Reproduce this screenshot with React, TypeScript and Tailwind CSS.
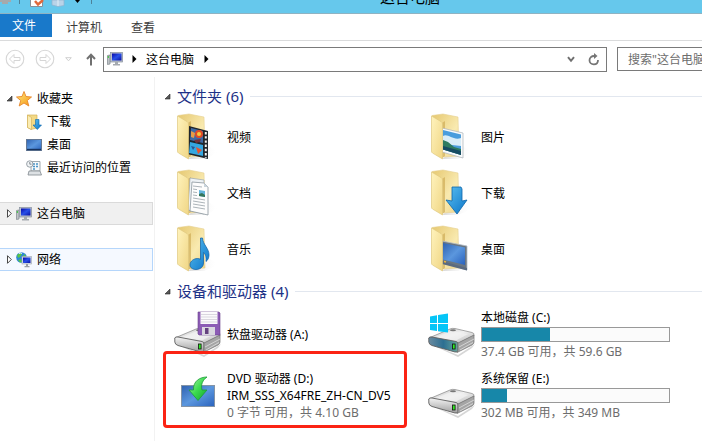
import React from "react";

type Kids = { children?: React.ReactNode };

function Defs() {
  return (
    <svg width="0" height="0" className="absolute" aria-hidden="true">
      <defs>
        <linearGradient id="flap" x1="0" y1="0" x2="1" y2="1">
          <stop offset="0" stopColor="#fff3bd" />
          <stop offset="1" stopColor="#f0d685" />
        </linearGradient>
        <linearGradient id="back" x1="0" y1="0" x2="1" y2="1">
          <stop offset="0" stopColor="#e6c870" />
          <stop offset="0.6" stopColor="#f9eab0" />
          <stop offset="1" stopColor="#efd58a" />
        </linearGradient>
        <linearGradient id="arrow" x1="0" y1="0" x2="1" y2="1">
          <stop offset="0" stopColor="#5cc0f0" />
          <stop offset="1" stopColor="#0a74c8" />
        </linearGradient>
        <linearGradient id="screen" x1="0" y1="0" x2="1" y2="1">
          <stop offset="0" stopColor="#2f62b0" />
          <stop offset="0.5" stopColor="#5b97de" />
          <stop offset="1" stopColor="#2a62bd" />
        </linearGradient>
        <linearGradient id="monitor" x1="0" y1="0" x2="1" y2="1">
          <stop offset="0" stopColor="#0808a8" />
          <stop offset="0.5" stopColor="#2850e8" />
          <stop offset="1" stopColor="#0a10a0" />
        </linearGradient>
        <linearGradient id="top" x1="0" y1="0" x2="1" y2="1">
          <stop offset="0" stopColor="#c2c2c2" />
          <stop offset="0.5" stopColor="#f0f0f0" />
          <stop offset="1" stopColor="#b5b5b5" />
        </linearGradient>
        <linearGradient id="front" x1="0" y1="0" x2="0" y2="1">
          <stop offset="0" stopColor="#f4f4f4" />
          <stop offset="1" stopColor="#a0a0a0" />
        </linearGradient>
        <linearGradient id="frontBlue" x1="0" y1="0" x2="1" y2="0">
          <stop offset="0" stopColor="#6a8ba0" />
          <stop offset="0.5" stopColor="#2d6f92" />
          <stop offset="1" stopColor="#68a69a" />
        </linearGradient>
        <linearGradient id="green" x1="0" y1="0" x2="1" y2="1">
          <stop offset="0" stopColor="#b6f5b0" />
          <stop offset="0.5" stopColor="#3ddc50" />
          <stop offset="1" stopColor="#12a52c" />
        </linearGradient>
        <linearGradient id="star" x1="0" y1="0" x2="1" y2="1">
          <stop offset="0" stopColor="#ffec80" />
          <stop offset="1" stopColor="#f49412" />
        </linearGradient>
        <linearGradient id="shade" x1="0" y1="0" x2="1" y2="0">
          <stop offset="0" stopColor="#bbbbbb" />
          <stop offset="1" stopColor="#ffffff" stopOpacity="0" />
        </linearGradient>
      </defs>
    </svg>
  );
}

function Folder({ children }: Kids) {
  return (
    <svg width="48" height="48" viewBox="0 0 48 48" className="shrink-0" aria-hidden="true">
      <path d="M14 46 L30 46 L44 40 L34 32Z" fill="url(#shade)" opacity="0.6" />
      <path d="M4 2.5 L15 1 L30 4 L31 43 L14 44Z" fill="url(#back)" stroke="#e6d090" strokeWidth="0.6" />
      <path d="M14 10 L17 8 L17 43 L14 45Z" fill="#c9a54c" opacity="0.6" />
      {children}
      <path d="M3.5 3 L13 8.5 Q14.5 9.5 14.5 11 V46 L4.5 40 Q3.5 39.5 3.5 38Z" fill="url(#flap)" stroke="#e0c87f" strokeWidth="0.7" />
    </svg>
  );
}

function VideoArt() {
  return (
    <g>
      <path d="M15 13 L34 18 V46 L13 41Z" fill="#20262c" />
      <path d="M17 15 L29 18 V30 L16 27Z" fill="#3e6aa6" />
      <path d="M16 29 L29 32 V43 L15 40Z" fill="#35a7e0" />
      <circle cx="25" cy="21" r="4" fill="#e04a28" />
      <circle cx="25" cy="21" r="2" fill="#f6c93a" />
      <path d="M17 18 L21 20 L20 25 L17 24Z" fill="#e89c48" />
      <path d="M20 27 L27 26 L26 29 L22 30Z" fill="#74313a" />
      <path d="M22 34 L28 37 L24 41Z" fill="#e8532e" />
      <path d="M17 33 L21 34 L19 37Z" fill="#2c5390" />
      <path d="M31.8 19 V45" stroke="#f4f4f4" strokeWidth="2" strokeDasharray="2.4 1.8" />
    </g>
  );
}

function DocumentArt() {
  return (
    <g>
      <path d="M16 9 L30 11 V45 L14 41Z" fill="#eef2f5" stroke="#9ba6ad" strokeWidth="0.7" />
      <path d="M18 13 L30 14 L34 18 V46 L16 42Z" fill="#fdfdfd" stroke="#8a959d" strokeWidth="0.8" />
      <path d="M30 14 V18 H34Z" fill="#c9d4dc" />
      <path d="M19 17 L28 18 M19 20 L23 20.6 M19 23 L23 23.6 M19 26 L23 26.6 M19 29 L31 31 M19 32 L31 34 M19 35 L31 37 M19 38 L31 40" stroke="#a3abb1" strokeWidth="0.9" />
      <path d="M25 21 L31 22 V28 L25 27Z" fill="#63b4dc" />
      <path d="M25 25 L28 24 L31 26 V28 L25 27Z" fill="#36775b" />
    </g>
  );
}

function MusicArt() {
  return (
    <g fill="url(#arrow)" stroke="#0b5ca4" strokeWidth="0.7">
      <path d="M26.5 13 H28.5 C29 20 35 23 35 30 C35 33 33.5 35.5 32 36.5 C32.5 31.5 31 28.5 29.5 27.5 V38 C29.5 42 26 44.5 22 44.5 C18.5 44.5 16 42.5 16 40 C16 36 20 33.5 23.5 33.5 C24.8 33.5 26 34 26.5 34.3Z" />
    </g>
  );
}

function PictureArt() {
  return (
    <g>
      <path d="M14 15 L35 20 V45 L14 39Z" fill="#f9fafb" stroke="#aab2b8" strokeWidth="0.7" />
      <path d="M15 17 L33 21.5 V42 L15 36.5Z" fill="#4a9ddd" />
      <path d="M15 23 C20 20 25 28 33 25 V33 L15 31Z" fill="#d9edf8" />
      <path d="M15 27 L20 29 L26 34 L33 36 V42 L15 36.5Z" fill="#2e7b60" />
      <path d="M15 33 L33 38 V42 L15 36.5Z" fill="#174b63" />
    </g>
  );
}

function DownloadArt() {
  return <path d="M24 18 L33 18 L34 20 V32 L39 31 L29 45 L18 31 L24 32Z" fill="url(#arrow)" stroke="#0c66ab" strokeWidth="0.8" />;
}

function DesktopArt() {
  return (
    <g>
      <path d="M14 16 L39 21 V45 L14 38Z" fill="#6a7682" stroke="#b5bec7" strokeWidth="0.8" />
      <path d="M15 18 L37 22.5 V40 L15 34.5Z" fill="url(#screen)" />
      <path d="M14 36 L39 43 V45.5 L14 39Z" fill="#5a6a80" />
      <path d="M16 36.5 L18 37" stroke="#f3b637" strokeWidth="1.5" />
    </g>
  );
}

function Drive({ blue = false, children }: Kids & { blue?: boolean }) {
  return (
    <svg width="48" height="48" viewBox="0 0 48 48" className="shrink-0" aria-hidden="true">
      <path d="M2 33 L30 44 L47 33 L44 37 L30 46Z" fill="#999" opacity="0.4" />
      <path d="M0.8 27 L22 18 Q24 17 27 17.5 L44 21.5 Q46.5 22 46 24.5 L31 32Z" fill="url(#top)" stroke="#858585" strokeWidth="0.7" />
      <path d="M7 26.5 L23 20 L40 23 L28 29.5Z" fill="#f1f1f1" opacity="0.75" />
      <path d="M0.8 27 Q1.5 25.5 4 26 L28 30.5 Q30 31 30 33 V39.5 Q30 41.5 27 41 L4 34.5 Q1 33.5 0.8 31Z" fill={blue ? "url(#frontBlue)" : "url(#front)"} stroke="#5e5e5e" strokeWidth="0.9" />
      <path d="M30 32 L46 24 V31 Q46 33 44 34 L29 41.5 Q30 40 30 39Z" fill="#a5a5a5" stroke="#707070" strokeWidth="0.7" />
      <path d="M31 36 L46 28 M32 39 L45 31.5" stroke="#dedede" strokeWidth="0.8" />
      <rect x="24.5" y="33" width="2.6" height="5" fill="#2fea20" stroke="#111" strokeWidth="0.8" />
      <ellipse cx="25" cy="19.2" rx="3" ry="1" fill="#777" />
      {children}
    </svg>
  );
}

function FloppyArt() {
  return (
    <g>
      <path d="M24 1 H45 L46 2 V24 H25 L24 23Z" fill="#8c5cb5" stroke="#68408c" strokeWidth="0.6" />
      <rect x="26.5" y="1" width="17" height="12" fill="#fbfafc" />
      <path d="M27 3.5 H43 M27 6 H43 M27 8.5 H43 M27 11 H43" stroke="#ccc7d3" strokeWidth="0.7" />
      <rect x="28" y="16" width="13" height="8" fill="#d9d7df" />
      <rect x="31" y="17" width="3.5" height="6" fill="#64427f" />
    </g>
  );
}

function WindowsArt() {
  return <path d="M2 5.5 L9 4.3 V12 H2Z M10 4.1 L20 2.5 V12 H10Z M2 13 H9 V20 L2 19Z M10 13 H20 V21.5 L10 20.2Z" fill="#05c5f7" />;
}

function DvdIcon() {
  return (
    <svg width="48" height="48" viewBox="0 0 48 48" className="shrink-0" aria-hidden="true">
      <rect x="7.5" y="13.5" width="33" height="21" fill="url(#screen)" stroke="#8494a6" />
      <path d="M33 5 C26 5 19 9 19.5 18 H15 L24 28.5 L33 18 H28 C26.5 12 29 8 33 5Z" fill="url(#green)" stroke="#1c9c38" strokeWidth="0.8" />
    </svg>
  );
}

function Computer() {
  return (
    <svg width="16" height="16" viewBox="0 0 16 16" className="shrink-0" aria-hidden="true">
      <path d="M0.5 4.5 L3 4 V13 L0.5 13.5Z" fill="#bfc3c7" stroke="#7d858b" strokeWidth="0.7" />
      <path d="M0.8 6 H2" stroke="#28c828" strokeWidth="1.3" />
      <rect x="3.6" y="1.5" width="12" height="9.5" fill="#b9c0cb" stroke="#87909e" strokeWidth="0.7" />
      <rect x="5" y="2.5" width="9.5" height="7" fill="url(#monitor)" />
      <path d="M8 11 H11 V13 H13 V14.5 H6 V13 H8Z" fill="#a5aaaf" />
    </svg>
  );
}

function NetworkIcon() {
  return (
    <svg width="16" height="16" viewBox="0 0 16 16" className="shrink-0" aria-hidden="true">
      <circle cx="5.5" cy="5.5" r="5.3" fill="#2e86d8" />
      <path d="M1 3 L4 1 L6 2 L4 5 L2 6Z M6 5 L9 2 L10 6 L7 7Z M2 8 L5 7 L6 10 L4 10.5Z" fill="#58c544" />
      <path d="M3 1.5 Q5 0.5 6 1.5" stroke="#e6f8ff" strokeWidth="1" fill="none" />
      <rect x="6" y="4.5" width="9.5" height="7.5" fill="#dde3ea" stroke="#99a3ae" strokeWidth="0.6" />
      <rect x="7" y="5.5" width="7.5" height="5.5" fill="url(#monitor)" />
      <path d="M10 12 H12 V14 H13.5 V15.3 H8.5 V14 H10Z" fill="#9aa0a6" />
    </svg>
  );
}

function StarIcon() {
  return (
    <svg width="16" height="16" viewBox="0 0 16 16" className="shrink-0" aria-hidden="true">
      <path d="M8 0.5 L10 5.5 L15.5 6 L11.3 9.5 L12.8 15 L8 12 L3.2 15 L4.7 9.5 L0.5 6 L6 5.5Z" fill="url(#star)" stroke="#e8862a" strokeWidth="0.9" />
    </svg>
  );
}

function SmallDownload() {
  return (
    <svg width="16" height="16" viewBox="0 0 16 16" className="shrink-0" aria-hidden="true">
      <path d="M1.5 1 H11 V14 L5 15.5 L1.5 13.5Z" fill="#f3d985" stroke="#d3b35c" strokeWidth="0.7" />
      <path d="M1.5 1 L5.5 3.5 V15.5 L1.5 13.5Z" fill="#fbecb2" stroke="#d0ae55" strokeWidth="0.6" />
      <path d="M9.5 5.5 H13 V11 H15.5 L11.3 15.5 L7 11 H9.5Z" fill="url(#arrow)" stroke="#0c66ab" strokeWidth="0.6" />
    </svg>
  );
}

function SmallDesktop() {
  return (
    <svg width="16" height="16" viewBox="0 0 16 16" className="shrink-0" aria-hidden="true">
      <rect x="0.5" y="2.5" width="15" height="11" fill="url(#screen)" stroke="#647894" />
      <path d="M1 12.5 H15" stroke="#17335f" strokeWidth="1.4" />
    </svg>
  );
}

function RecentIcon() {
  return (
    <svg width="16" height="16" viewBox="0 0 16 16" className="shrink-0" aria-hidden="true">
      <path d="M5 1.5 H14 V11 H5Z" fill="#f7f9fa" stroke="#8a949b" strokeWidth="0.8" />
      <path d="M7 4 H9 M10 4 H12 M7 6.5 H9 M10 6.5 H12 M7 9 H9" stroke="#4b95c8" strokeWidth="1.4" />
      <path d="M3 11 H14 L15.5 15 H2Z" fill="#dde1e4" stroke="#80888e" strokeWidth="0.8" />
      <circle cx="3.8" cy="4" r="3.2" fill="#f1f4f6" stroke="#8f989f" strokeWidth="0.9" />
      <path d="M3.8 2 V4.2 H5.5" stroke="#59636a" strokeWidth="0.7" fill="none" />
    </svg>
  );
}

function Expanded() {
  return (
    <svg width="7" height="7" viewBox="0 0 7 7" className="shrink-0" aria-hidden="true">
      <path d="M6 1 V6 H1Z" fill="#595959" stroke="#262626" strokeWidth="0.6" />
    </svg>
  );
}

function Collapsed() {
  return (
    <svg width="7" height="9" viewBox="0 0 7 9" className="shrink-0" aria-hidden="true">
      <path d="M1.5 0.7 L5.3 4.5 L1.5 8.3Z" fill="#fff" stroke="#333" strokeWidth="0.9" />
    </svg>
  );
}

function CrumbArrow() {
  return (
    <svg width="5" height="8" viewBox="0 0 5 8" className="shrink-0" aria-hidden="true">
      <path d="M0.5 0 L4.5 4 L0.5 8Z" fill="#000" />
    </svg>
  );
}

function NavCircle({ label, back = false }: { label: string; back?: boolean }) {
  return (
    <button type="button" aria-label={label} className="size-5 shrink-0">
      <svg width="20" height="20" viewBox="0 0 20 20" fill="none" stroke="#d6d6d6">
        <circle cx="10" cy="10" r="8.8" strokeWidth="1.1" />
        {back ? (
          <path d="M4.5 10 L9 5.5 V8.5 H15 V11.5 H9 V14.5Z" />
        ) : (
          <path d="M15.5 10 L11 5.5 V8.5 H5 V11.5 H11 V14.5Z" />
        )}
      </svg>
    </button>
  );
}

function TitleBar() {
  return (
    <header className="flex h-[14px] items-end overflow-hidden border-b border-[#8fb3c2] bg-[#66c8ec]">
      <div className="flex h-full w-[118px] shrink-0 items-start">
        <svg width="100" height="8" viewBox="0 0 100 8" aria-hidden="true">
          <path d="M0 0 H11 V2 H8 V4 H2 V2 H0Z" fill="#a5a9ac" />
          <path d="M19.5 0 V4 M91.5 0 V4" stroke="#4d8299" />
          <path d="M30.5 0 V6.5 H42.5 V0" fill="#fff" stroke="#8a8f96" />
          <path d="M35 1 L38 4.5 L43 0" stroke="#e2683a" strokeWidth="2.5" fill="none" />
          <path d="M52 0 V5 L58 6.5 L64 5.5 V0Z" fill="#b9d3e8" stroke="#90b3cf" strokeWidth="0.7" />
          <path d="M58 0 V6" stroke="#e1eef7" />
          <path d="M75 0 H80 L77.5 3Z" fill="#000" />
        </svg>
      </div>
      <h1 className="flex-1 pb-2 text-center text-[15px] leading-[15px] text-black">这台电脑</h1>
    </header>
  );
}

function MenuTabs() {
  return (
    <nav className="flex h-[27px] items-start border-b border-[#dadbdc]">
      <button type="button" className="h-[23px] w-[52px] bg-[#1979ca] pr-1 text-white">文件</button>
      <button type="button" className="h-[26px] w-16 text-[#3b3b3b]">计算机</button>
      <button type="button" className="h-[26px] w-[54px] text-[#3b3b3b]">查看</button>
    </nav>
  );
}

function AddressRow() {
  return (
    <div className="flex h-9 items-center">
      <div className="flex w-[103px] shrink-0 items-center pl-[5px]">
        <NavCircle label="后退" back />
        <span className="w-[10px]" />
        <NavCircle label="前进" />
        <button type="button" aria-label="最近浏览的位置" className="ml-[10px]">
          <svg width="7" height="5" viewBox="0 0 7 5">
            <path d="M0.7 0.7 H6.3 L3.5 3.8Z" fill="none" stroke="#cfcfcf" />
          </svg>
        </button>
        <button type="button" aria-label="上移" className="ml-[14px]">
          <svg width="10" height="13" viewBox="0 0 10 13" fill="none" stroke="#707070" strokeWidth="2">
            <path d="M5 12.5 V2 M1 6 L5 1.8 L9 6" />
          </svg>
        </button>
      </div>
      <div className="flex h-[25px] flex-1 items-center border border-[#7a7a7a] pl-[3px] pr-1.5">
        <Computer />
        <span className="w-[9px]" />
        <CrumbArrow />
        <button type="button" className="ml-[9px] mr-[10px] text-black">这台电脑</button>
        <CrumbArrow />
        <span className="flex-1" />
        <button type="button" aria-label="以前的位置" className="mr-[13px]">
          <svg width="8" height="7" viewBox="0 0 8 7" fill="none" stroke="#707070" strokeWidth="2">
            <path d="M1 1.2 L4 4.8 L7 1.2" />
          </svg>
        </button>
        <button type="button" aria-label="刷新">
          <svg width="12" height="13" viewBox="0 0 12 13" fill="none" stroke="#757575" strokeWidth="1.8">
            <path d="M6.5 3 C3.5 2.8 1.5 4.8 1.5 7.2 C1.5 9.6 3.4 11.4 5.8 11.4 C8.2 11.4 10 9.6 10 7" />
            <path d="M6 0 L9.5 3 L6 6Z" fill="#757575" stroke="none" />
          </svg>
        </button>
      </div>
      <input
        type="text"
        aria-label="搜索"
        placeholder={'搜索"这台电脑"'}
        className="ml-[10px] h-6 w-[85px] shrink-0 appearance-none rounded-none border border-r-0 border-[#7a7a7a] bg-white pl-[10px] text-[#6d6d6d] outline-none placeholder:text-[#6d6d6d]"
      />
    </div>
  );
}

function Sidebar() {
  return (
    <nav className="w-[155px] shrink-0 border-r border-[#f2f2f2] pr-px pt-[10px] text-black">
      <button type="button" className="flex h-[23px] w-full items-center pl-[6px]">
        <Expanded />
        <span className="ml-[3px] mr-[5px]"><StarIcon /></span>
        收藏夹
      </button>
      <button type="button" className="flex h-[23px] w-full items-center gap-[5px] pl-[26px]"><SmallDownload />下载</button>
      <button type="button" className="flex h-[23px] w-full items-center gap-[5px] pl-[26px]"><SmallDesktop />桌面</button>
      <button type="button" className="flex h-[23px] w-full items-center gap-[5px] pl-[26px]"><RecentIcon />最近访问的位置</button>
      <button type="button" className="mt-[23px] flex h-[23px] w-full items-center border border-l-0 border-[#dadada] bg-[#f0f0f0] pl-[6px]">
        <Collapsed />
        <span className="ml-[3px] mr-[5px]"><Computer /></span>
        这台电脑
      </button>
      <button type="button" className="mt-[23px] flex h-[23px] w-full items-center border border-l-0 border-[#b5d6fb] bg-[#f5f9ff] pl-[6px]">
        <Collapsed />
        <span className="ml-[3px] mr-[5px]"><NetworkIcon /></span>
        网络
      </button>
    </nav>
  );
}

function SectionTitle({ children }: Kids) {
  return (
    <h2 className="flex h-[26px] items-center text-[15px] leading-5 text-[#1e3287]">
      <Expanded />
      <span className="ml-[6px] mr-[7px]">{children}</span>
      <span className="h-px flex-1 bg-[#e2e7ef]" />
    </h2>
  );
}

const folders = [
  { name: "视频", art: <VideoArt /> },
  { name: "图片", art: <PictureArt /> },
  { name: "文档", art: <DocumentArt /> },
  { name: "下载", art: <DownloadArt /> },
  { name: "音乐", art: <MusicArt /> },
  { name: "桌面", art: <DesktopArt /> },
];

function DiskInfo({ name, used, detail }: { name: string; used: number; detail: string }) {
  return (
    <span className="block w-[189px] text-left leading-[17px]">
      <span className="block text-black">{name}</span>
      <span role="meter" aria-label={name} aria-valuenow={used} aria-valuemin={0} aria-valuemax={100} className="my-px block h-[15px] border border-[#999] bg-[#fbfbfb]">
        <span className="block h-full bg-[#1787a9]" style={{ width: `${used}%` }} />
      </span>
      <span className="block text-[#6d6d6d]">{detail}</span>
    </span>
  );
}

export default function App() {
  return (
    <div className="flex h-screen flex-col overflow-hidden bg-white font-['Noto_Sans','Noto_Sans_CJK_SC',sans-serif] text-[12px] leading-[17px]">
      <Defs />
      <TitleBar />
      <MenuTabs />
      <AddressRow />
      <div className="flex min-h-0 flex-1">
        <Sidebar />
        <main className="min-w-0 flex-1 overflow-hidden pl-[9px] pt-[6px]">
          <SectionTitle>文件夹 (6)</SectionTitle>
          <div className="grid grid-cols-[254px_254px] pl-[10px]">
            {folders.map((f) => (
              <button type="button" key={f.name} className="flex h-14 items-center gap-[5px] text-black">
                <Folder>{f.art}</Folder>
                {f.name}
              </button>
            ))}
          </div>
          <div className="pt-px">
            <SectionTitle>设备和驱动器 (4)</SectionTitle>
          </div>
          <div className="grid grid-cols-[254px_254px] pl-[10px]">
            <button type="button" className="flex h-[61px] items-center gap-[5px] text-black">
              <Drive><FloppyArt /></Drive>
              软盘驱动器 (A:)
            </button>
            <button type="button" className="flex h-[61px] items-center gap-[5px]">
              <Drive blue><WindowsArt /></Drive>
              <DiskInfo name="本地磁盘 (C:)" used={36.5} detail="37.4 GB 可用，共 59.6 GB" />
            </button>
            <div className="relative h-[61px]">
              <button type="button" className="flex h-full items-center gap-[5px]">
                <DvdIcon />
                <span className="block whitespace-nowrap text-left">
                  <span className="block text-black">DVD 驱动器 (D:)</span>
                  <span className="block text-black">IRM_SSS_X64FRE_ZH-CN_DV5</span>
                  <span className="block text-[#6d6d6d]">0 字节 可用，共 4.10 GB</span>
                </span>
              </button>
              <span className="pointer-events-none absolute -left-[11px] -top-[14px] h-[77px] w-[244px] rounded-[4px] border-[3px] border-[#fb2314]" />
            </div>
            <button type="button" className="flex h-[61px] items-center gap-[5px]">
              <Drive />
              <DiskInfo name="系统保留 (E:)" used={13.5} detail="302 MB 可用，共 349 MB" />
            </button>
          </div>
        </main>
      </div>
    </div>
  );
}
